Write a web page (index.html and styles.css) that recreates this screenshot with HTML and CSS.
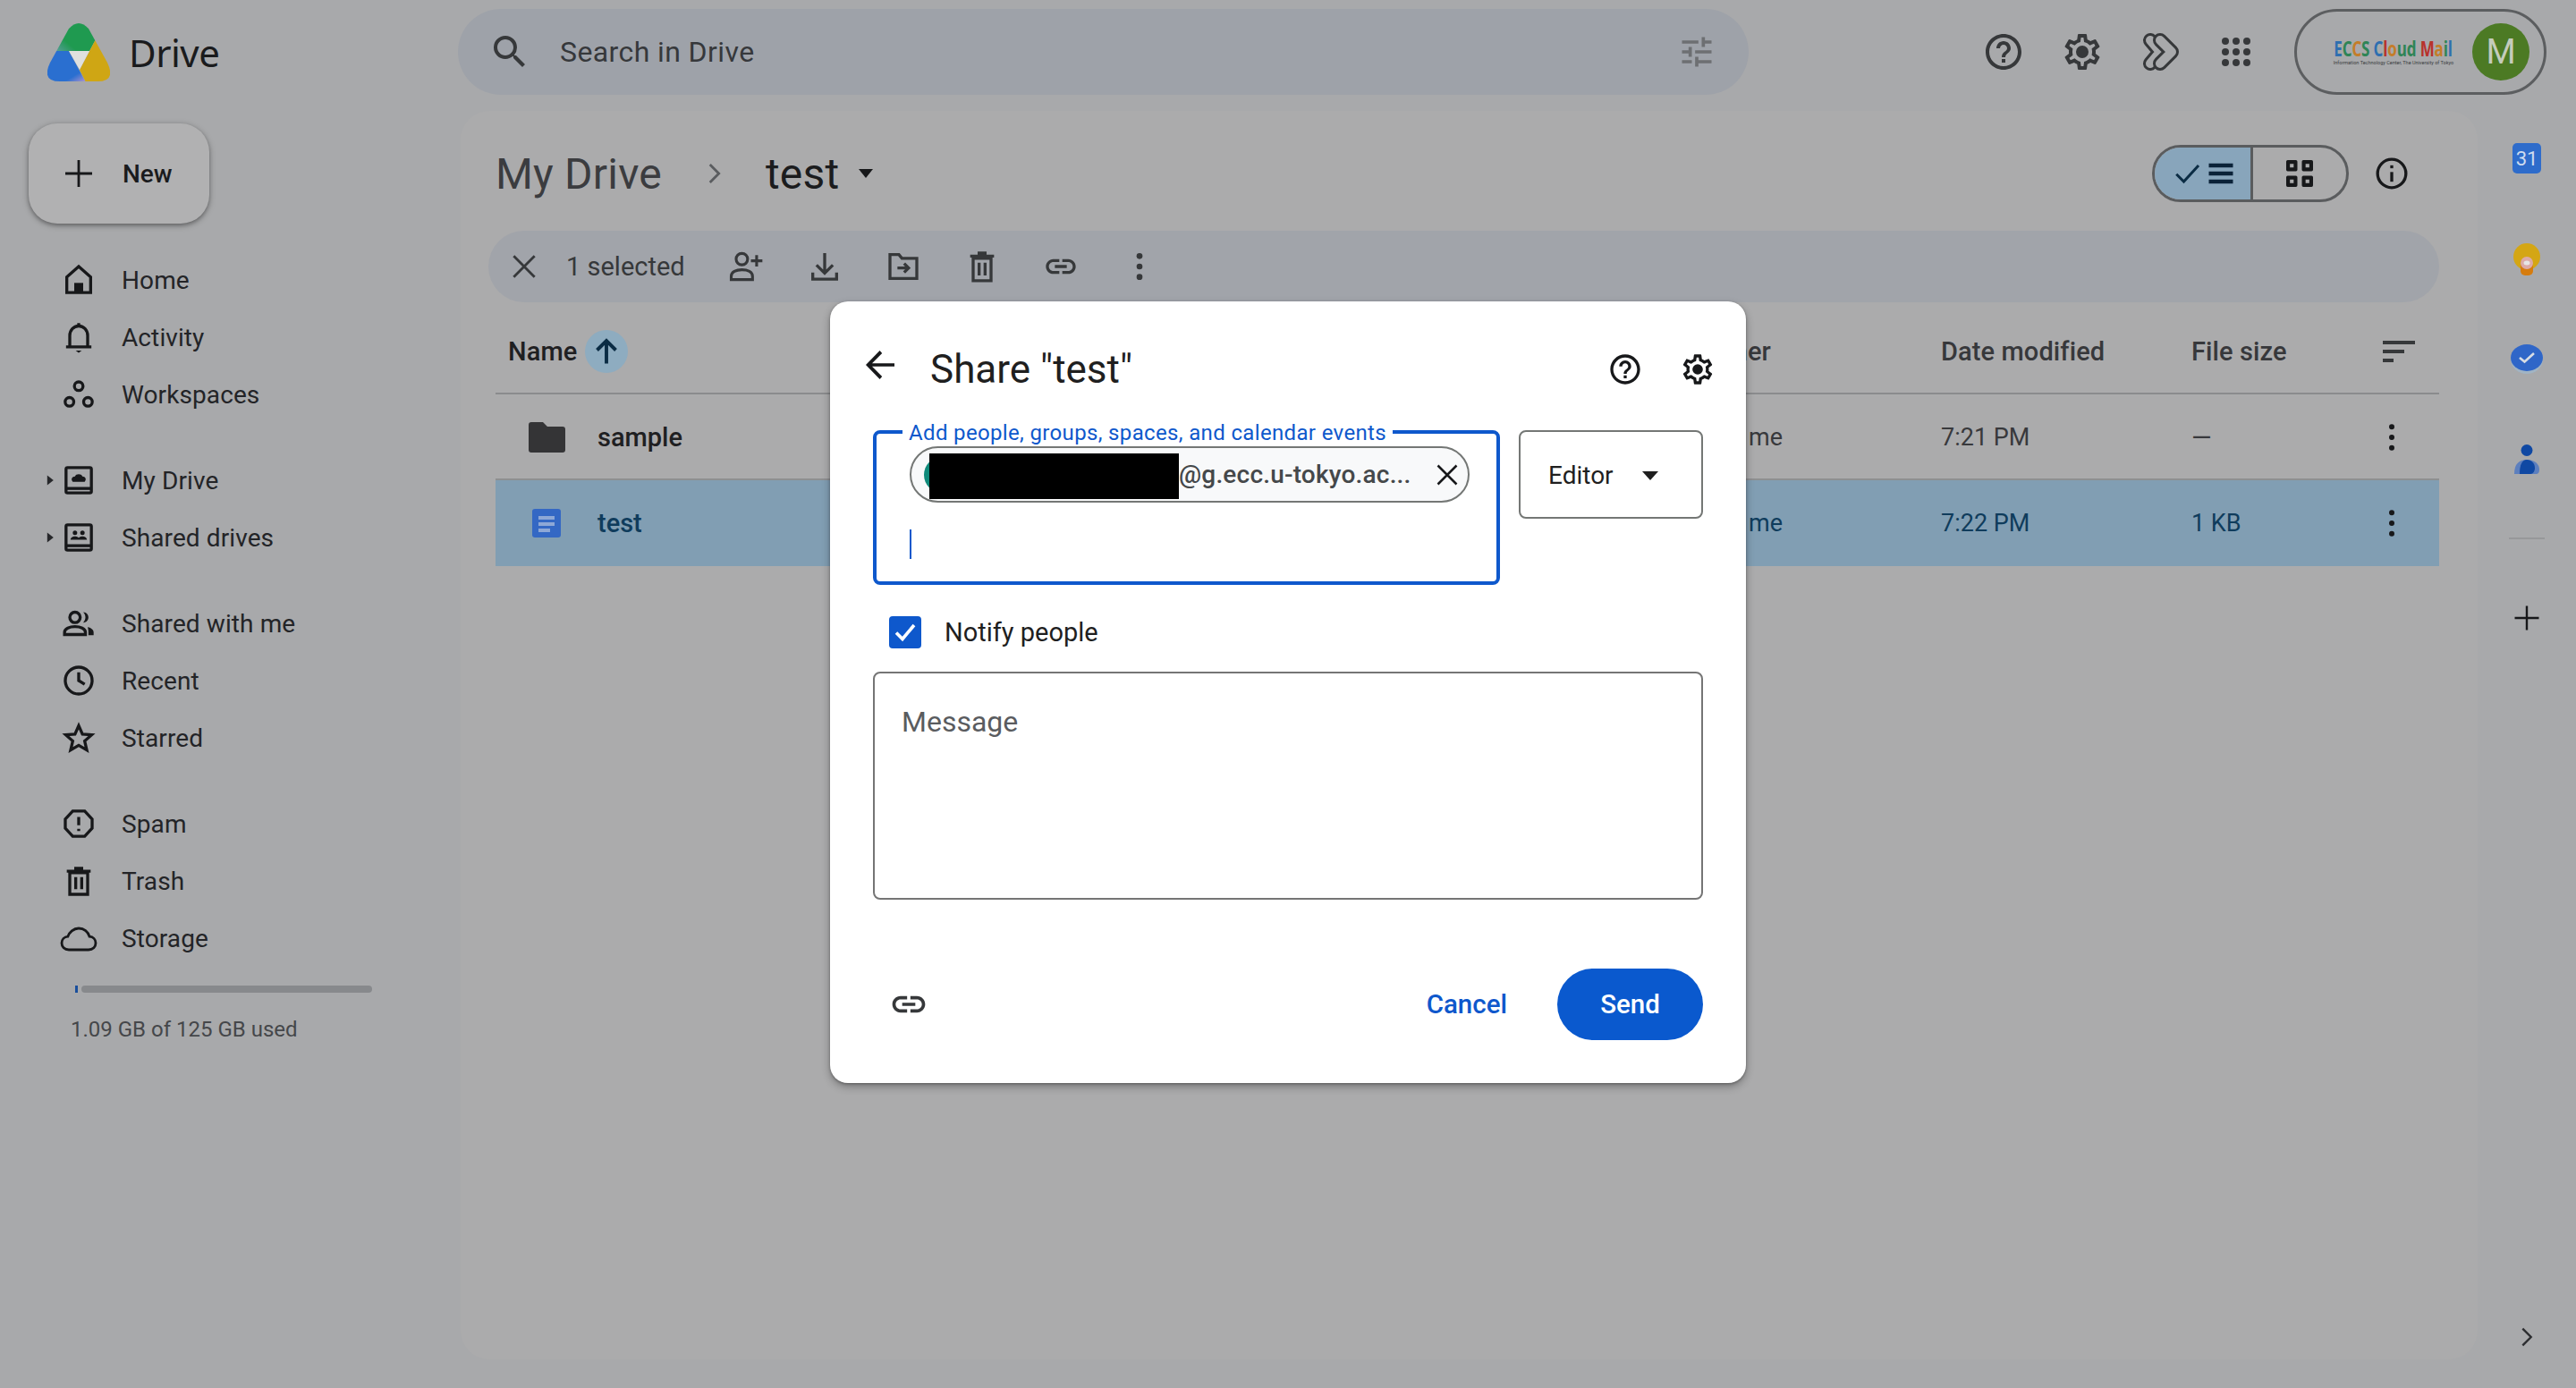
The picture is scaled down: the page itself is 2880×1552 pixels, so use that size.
FILE: index.html
```html
<!DOCTYPE html>
<html lang="en">
<head>
<meta charset="utf-8">
<title>Drive</title>
<link rel="stylesheet" href="styles.css">
</head>
<body>
<div class="app">
  <header class="topbar">
    <div class="brand">
      <svg class="logo" viewBox="0 0 70 65">
        <defs>
          <clipPath id="lg"><path d="M24 6Q35-6 46 6L67 44Q77 65 56 65L14 65Q-7 65 3 44Z"/></clipPath>
          <linearGradient id="gt" x1="0" y1="1" x2="1" y2="0.4"><stop offset="0" stop-color="#6f9fb8"/><stop offset=".35" stop-color="#1f9a50"/></linearGradient>
          <linearGradient id="bp" x1="0.4" y1="0.4" x2="0.9" y2="1"><stop offset=".65" stop-color="#2a6fd0"/><stop offset="1" stop-color="#9b8fd0"/></linearGradient>
        </defs>
        <g clip-path="url(#lg)">
          <polygon points="0,-5 70,-5 70,20 54,18 47,31 10,31" fill="url(#gt)"/>
          <polygon points="-5,31 24,31 43,66 -5,66" fill="url(#bp)"/>
          <polygon points="54,18 75,18 75,66 43,66 36,52" fill="#cfa614"/>
          <polygon points="24,31 47,31 36,52" fill="#dfe0de"/>
        </g>
      </svg>
      <span class="brand-name">Drive</span>
    </div>
    <div class="search">
      <span class="ibox"><svg class="i48 c-dark" viewBox="0 0 24 24"><path d="M15.5 14h-.79l-.28-.27A6.471 6.471 0 0 0 16 9.5 6.5 6.5 0 1 0 9.5 16c1.61 0 3.09-.59 4.23-1.57l.27.28v.79l5 4.99L20.49 19l-4.99-5zm-6 0C7.01 14 5 11.99 5 9.5S7.01 5 9.5 5 14 7.01 14 9.5 11.99 14 9.5 14z"/></svg></span>
      <span class="search-text">Search in Drive</span>
      <span class="ibox search-tune"><svg class="i44 c-mid" viewBox="0 0 24 24"><path d="M3 17v2h6v-2H3zM3 5v2h10V5H3zm10 16v-2h8v-2h-8v-2h-2v6h2zM7 9v2H3v2h4v2h2V9H7zm14 4v-2H11v2h10zm-6-4h2V7h4V5h-4V3h-2v6z"/></svg></span>
    </div>
    <div class="actions">
      <span class="ibox"><svg class="i48 c-dark" viewBox="0 0 24 24"><path d="M11 18h2v-2h-2v2zm1-16C6.48 2 2 6.48 2 12s4.48 10 10 10 10-4.48 10-10S17.52 2 12 2zm0 18c-4.41 0-8-3.59-8-8s3.59-8 8-8 8 3.59 8 8-3.59 8-8 8zm0-14c-2.21 0-4 1.79-4 4h2c0-1.1.9-2 2-2s2 .9 2 2c0 2-3 1.75-3 5h2c0-2.25 3-2.5 3-5 0-2.21-1.79-4-4-4z"/></svg></span>
      <span class="ibox"><svg class="i48 c-dark" viewBox="0 0 24 24"><use href="#gear"/></svg></span>
      <span class="ibox"><svg class="i48 blob" viewBox="0 0 24 24"><path class="blob-o" d="M6 5.500l5.500 6.500L6 18.500"/><path class="blob-i" d="M6 5.500l5.500 6.500L6 18.500"/><path class="blob-o" d="M11.500 5.500L18 12l-6.500 6.500"/><path class="blob-i" d="M11.500 5.500L18 12l-6.500 6.500"/></svg></span>
      <span class="ibox apps-box"><svg class="i48 c-dark" viewBox="0 0 24 24"><circle cx="6" cy="6" r="2"/><circle cx="12" cy="6" r="2"/><circle cx="18" cy="6" r="2"/><circle cx="6" cy="12" r="2"/><circle cx="12" cy="12" r="2"/><circle cx="18" cy="12" r="2"/><circle cx="6" cy="18" r="2"/><circle cx="12" cy="18" r="2"/><circle cx="18" cy="18" r="2"/></svg></span>
      <div class="account">
        <div class="org">
          <div class="org-name"><span class="k-b">E</span><span class="k-g">C</span><span class="k-o">C</span><span class="k-g">S</span> <span class="k-b">C</span><span class="k-r">l</span><span class="k-o">o</span><span class="k-g">u</span><span class="k-g">d</span> <span class="k-r">M</span><span class="k-o">a</span><span class="k-g">i</span><span class="k-b">l</span></div>
          <div class="org-sub">Information Technology Center, The University of Tokyo</div>
        </div>
        <div class="avatar">M</div>
      </div>
    </div>
  </header>

  <div class="layout">
    <aside class="sidebar">
      <button class="new-btn"><svg class="i48 c-ink" viewBox="0 0 24 24"><path d="M11.300 4.500h1.400v6.800h6.800v1.400h-6.800v6.800h-1.400v-6.800H4.500v-1.400h6.800z"/></svg><span>New</span></button>
      <nav class="nav">
        <div class="nav-group">
          <a class="nav-item"><span class="car"></span><span class="nav-ic"><svg class="i40 stroke-ink" viewBox="0 0 24 24"><path d="M4 20.500V10l8-7 8 7v10.500z"/><path class="fill-ink" d="M9 14h6v6.500H9z"/></svg></span>Home</a>
          <a class="nav-item"><span class="car"></span><span class="nav-ic"><svg class="i40 stroke-ink" viewBox="0 0 24 24"><path d="M3.500 18.500h17M6 18.500V11c0-3.500 2.500-6.500 6-6.500s6 3 6 6.500v7.500"/><path class="fill-ink" d="M10 21h4l-2 1.500zM11 2.500h2v2h-2z"/></svg></span>Activity</a>
          <a class="nav-item"><span class="car"></span><span class="nav-ic"><svg class="i40 stroke-ink" viewBox="0 0 24 24"><circle cx="12" cy="6.500" r="2.900"/><circle cx="5.800" cy="17" r="2.900"/><circle cx="18.200" cy="17" r="2.900"/></svg></span>Workspaces</a>
        </div>
        <div class="nav-group">
          <a class="nav-item"><span class="car car-on"></span><span class="nav-ic"><svg class="i40 stroke-ink" viewBox="0 0 24 24"><rect x="3.500" y="3.500" width="17" height="17" rx="1"/><path d="M3.500 17.500h17"/><path class="fill-ink" d="M8 13c-1.500-1.500-.5-3.500 1.500-3.500.5-2 4.500-2 5 0 2 0 3 2 1.500 3.500z"/></svg></span>My Drive</a>
          <a class="nav-item"><span class="car car-on"></span><span class="nav-ic"><svg class="i40 stroke-ink" viewBox="0 0 24 24"><rect x="3.500" y="3.500" width="17" height="17" rx="1"/><path d="M3.500 17.500h17"/><path class="fill-ink" d="M6.500 13.500c0-1.500 1.500-2.300 3-2.300s3 .8 3 2.300zM11.500 13.500c0-1.500 1.500-2.300 3-2.300s3 .8 3 2.300z"/><circle class="fill-ink" cx="9.500" cy="8.800" r="1.500"/><circle class="fill-ink" cx="14.500" cy="8.800" r="1.500"/></svg></span>Shared drives</a>
        </div>
        <div class="nav-group">
          <a class="nav-item"><span class="car"></span><span class="nav-ic"><svg class="i40 stroke-ink" viewBox="0 0 24 24"><circle cx="9.500" cy="8" r="3.500"/><path d="M2.500 19.500v-1.500c0-2.500 3.500-3.800 7-3.800s7 1.300 7 3.800v1.500z"/><path class="fill-ink" d="M15 4.500c2.500 0 3.500 2 3.500 3.500s-1 3.500-3.500 3.500c1-1 1.500-2.200 1.500-3.500S16 5.500 15 4.500zM18 14.500c2.500.5 4 1.800 4 3.500v2h-3.500v-2c0-1.500-.2-2.500-.5-3.500z"/></svg></span>Shared with me</a>
          <a class="nav-item"><span class="car"></span><span class="nav-ic"><svg class="i40 stroke-ink" viewBox="0 0 24 24"><circle cx="12" cy="12" r="9"/><path d="M12 6.500V12l4 2.500"/></svg></span>Recent</a>
          <a class="nav-item"><span class="car"></span><span class="nav-ic"><svg class="i40 stroke-ink" viewBox="0 0 24 24"><path d="M12 3.800l2.500 5.700 6.200.5-4.700 4.100 1.400 6.100-5.400-3.200-5.400 3.200 1.400-6.100-4.700-4.100 6.200-.5z"/></svg></span>Starred</a>
        </div>
        <div class="nav-group">
          <a class="nav-item"><span class="car"></span><span class="nav-ic"><svg class="i40 stroke-ink" viewBox="0 0 24 24"><path d="M8 3.500h8l5 5.500v6l-5 5.500H8L3 15V9z"/><path d="M12 7.500v5.500M12 15.500v1.500"/></svg></span>Spam</a>
          <a class="nav-item"><span class="car"></span><span class="nav-ic"><svg class="i40 stroke-ink" viewBox="0 0 24 24"><path d="M6 6.500h12v14.500H6zM4 5.500h16M9 3.500h6M10 9.500v8M14 9.500v8"/></svg></span>Trash</a>
          <a class="nav-item"><span class="car"></span><span class="nav-ic"><svg class="i48 stroke-thin" viewBox="0 0 24 24"><path d="M6.500 18.500c-2.500 0-4-1.700-4-3.700 0-2 1.500-3.500 3.400-3.700C6.700 8.800 9.100 6.500 12 6.500c3 0 5.300 2 6 4.600 2 .2 3.500 1.700 3.500 3.700s-1.500 3.700-4 3.700z"/></svg></span>Storage</a>
        </div>
      </nav>
      <div class="quota"><span class="quota-used"></span><span class="quota-free"></span></div>
      <div class="quota-text">1.09 GB of 125 GB used</div>
    </aside>

    <main class="card">
      <div class="title-row">
        <div class="crumbs">
          <span class="crumb">My Drive</span>
          <svg class="crumb-sep" viewBox="0 0 24 24"><path d="M9 5l7 7-7 7"/></svg>
          <span class="crumb crumb-cur">test</span>
          <svg class="crumb-caret" viewBox="0 0 20 12"><path d="M2 1h16l-8 10z"/></svg>
        </div>
        <div class="title-right">
          <div class="toggle">
            <span class="tog tog-on">
              <svg class="i36 stroke-navy" viewBox="0 0 24 24"><path d="M3.500 12.500l5.500 5.500 11-12"/></svg>
              <svg class="i36 bars" viewBox="0 0 24 24"><path d="M3 4.500h18v3H3zM3 10.500h18v3H3zM3 16.500h18v3H3z"/></svg>
            </span>
            <span class="tog"><svg class="i40 c-ink" viewBox="0 0 24 24"><path fill-rule="evenodd" d="M4 3h5.500a1 1 0 0 1 1 1v5.500a1 1 0 0 1-1 1H4a1 1 0 0 1-1-1V4a1 1 0 0 1 1-1zm1.500 2.500v2.500H8V5.500zM14.500 3H20a1 1 0 0 1 1 1v5.500a1 1 0 0 1-1 1h-5.500a1 1 0 0 1-1-1V4a1 1 0 0 1 1-1zM16 5.500v2.500h2.500V5.500zM4 13.500h5.500a1 1 0 0 1 1 1V20a1 1 0 0 1-1 1H4a1 1 0 0 1-1-1v-5.500a1 1 0 0 1 1-1zM5.500 16v2.500H8V16zM14.500 13.500H20a1 1 0 0 1 1 1V20a1 1 0 0 1-1 1h-5.500a1 1 0 0 1-1-1v-5.500a1 1 0 0 1 1-1zM16 16v2.500h2.500V16z"/></svg></span>
          </div>
          <span class="ibox"><svg class="i40 stroke-ink" viewBox="0 0 24 24"><circle cx="12" cy="12" r="9.500"/><path d="M12 11v6.500"/><path d="M12 6.500v2"/></svg></span>
        </div>
      </div>

      <div class="toolbar">
        <span class="ibox"><svg class="i40 stroke-x-dark" viewBox="0 0 24 24"><path d="M5 5l14 14M19 5L5 19"/></svg></span>
        <span class="sel-count">1 selected</span>
        <div class="tool-icons">
          <span class="ibox"><svg class="i44 stroke-dark-thin" viewBox="0 0 24 24"><circle cx="9.500" cy="7.500" r="3.500"/><path d="M3 20v-2c0-2.700 3-4 6.500-4s6.500 1.300 6.500 4v2z"/><path d="M18.500 5v7M15 8.500h7"/></svg></span>
          <span class="ibox"><svg class="i40 stroke-dark" viewBox="0 0 24 24"><path d="M12 3v13M6.500 11l5.500 5.500 5.500-5.500M4 16v4.500h16V16"/></svg></span>
          <span class="ibox"><svg class="i40 stroke-dark" viewBox="0 0 24 24"><path d="M3 4h6l2 2.500h10V20H3z"/><path d="M8 13h7M12.500 10l3 3-3 3"/></svg></span>
          <span class="ibox"><svg class="i40 stroke-dark" viewBox="0 0 24 24"><path d="M6 6.500h12v15H6zM4 5h16M9 3h6M10 9.500v8.500M14 9.500v8.500"/></svg></span>
          <span class="ibox"><svg class="i40 c-dark" viewBox="0 0 24 24"><use href="#link"/></svg></span>
          <span class="ibox"><svg class="i40 c-dark" viewBox="0 0 24 24"><circle cx="12" cy="5" r="2"/><circle cx="12" cy="12" r="2"/><circle cx="12" cy="19" r="2"/></svg></span>
        </div>
      </div>

      <div class="table">
        <div class="thead">
          <div class="cell-name th-name"><span>Name</span><span class="sort-up"><svg class="i36 stroke-arrow" viewBox="0 0 24 24"><path d="M12 21V4M5 11l7-7 7 7"/></svg></span></div>
          <div>Owner</div>
          <div>Date modified</div>
          <div>File size</div>
          <div class="cell-more cell-sort"><svg class="sort-lines" viewBox="0 0 36 24"><path d="M0 0h36v4H0zM0 10h24v4H0zM0 20h12v4H0z"/></svg></div>
        </div>
        <div class="row">
          <div class="cell-name"><span class="file-ic"><svg class="folder" viewBox="0 0 41 34"><path d="M3 0h13l5 5h17a3 3 0 0 1 3 3v23a3 3 0 0 1-3 3H3a3 3 0 0 1-3-3V3a3 3 0 0 1 3-3z"/></svg></span><span class="file-name">sample</span></div>
          <div class="owner">me</div>
          <div>7:21 PM</div>
          <div class="dash">—</div>
          <div class="cell-more"><svg class="i40 c-ink" viewBox="0 0 24 24"><circle cx="12" cy="5" r="1.800"/><circle cx="12" cy="12" r="1.800"/><circle cx="12" cy="19" r="1.800"/></svg></div>
        </div>
        <div class="row row-sel">
          <div class="cell-name"><span class="file-ic"><svg class="doc" viewBox="0 0 32 32"><rect width="32" height="32" rx="3" fill="#3468c4"/><path d="M7 8h18v4H7zM7 15h18v4H7zM7 22h13v4H7z" fill="#8ea8d6"/></svg></span><span class="file-name">test</span></div>
          <div class="owner">me</div>
          <div>7:22 PM</div>
          <div>1 KB</div>
          <div class="cell-more"><svg class="i40 c-ink" viewBox="0 0 24 24"><circle cx="12" cy="5" r="1.800"/><circle cx="12" cy="12" r="1.800"/><circle cx="12" cy="19" r="1.800"/></svg></div>
        </div>
      </div>
    </main>

    <aside class="rail">
      <div class="cal">31</div>
      <svg class="keep" viewBox="0 0 30 36"><ellipse cx="15" cy="15" rx="15" ry="15" fill="#d4a614"/><path d="M8 24h14v7a5 5 0 0 1-5 5h-4a5 5 0 0 1-5-5z" fill="#d67c0e"/><circle cx="15" cy="22" r="7" fill="#dcaaa8"/><ellipse cx="15" cy="22" rx="3.500" ry="2.500" fill="#e6e6e6"/></svg>
      <svg class="tasks" viewBox="0 0 36 33"><ellipse cx="18" cy="17" rx="18" ry="16" fill="#a1b4c4"/><ellipse cx="18" cy="15" rx="18" ry="15" fill="#2f66c8"/><path d="M10 15l5.500 4.500L26 10" fill="none" stroke="#d8dde4" stroke-width="2.600"/></svg>
      <svg class="contacts" viewBox="0 0 28 33"><ellipse cx="14" cy="6.500" rx="6.500" ry="6.500" fill="#0f48a3"/><path d="M0 33c0-11 5-16 14-16s14 5 14 11c0 3-1 5-4 5z" fill="#5c7fbe"/><path d="M6 33c0-11 3-16 8-16s9 4 9 9c0 4-2 7-5 7z" fill="#0f48a3"/></svg>
      <div class="rail-div"></div>
      <svg class="i36 c-ink rail-plus" viewBox="0 0 24 24"><path d="M11.200 3h1.600v8.200H21v1.600h-8.200V21h-1.600v-8.200H3v-1.600h8.200z"/></svg>
      <svg class="rail-chev" viewBox="0 0 24 24"><path d="M8.500 5l7 7-7 7"/></svg>
    </aside>
  </div>

  <section class="dialog">
    <div class="dlg-head">
      <svg class="i48 dlg-back c-ink" viewBox="0 0 24 24"><path d="M20 11.100H7.500l5.600-5.600L11.800 4 4 12l7.800 8 1.300-1.500-5.600-5.600H20z"/></svg>
      <h1 class="dlg-title">Share "test"</h1>
      <div class="dlg-tools">
        <span class="dlg-tool"><svg class="i40 c-ink" viewBox="0 0 24 24"><path d="M11 18h2v-2h-2v2zm1-16C6.480 2 2 6.480 2 12s4.480 10 10 10 10-4.480 10-10S17.520 2 12 2zm0 18c-4.410 0-8-3.590-8-8s3.590-8 8-8 8 3.590 8 8-3.590 8-8 8zm0-14c-2.210 0-4 1.790-4 4h2c0-1.100.9-2 2-2s2 .9 2 2c0 2-3 1.750-3 5h2c0-2.250 3-2.500 3-5 0-2.210-1.790-4-4-4z"/></svg></span>
        <span class="dlg-tool"><svg class="i40 c-ink" viewBox="0 0 24 24"><use href="#gear"/></svg></span>
      </div>
    </div>
    <div class="dlg-fields">
      <div class="people">
        <label class="people-label">Add people, groups, spaces, and calendar events</label>
        <div class="chip">
          <span class="chip-av"></span>
          <span class="redact"></span>
          <span class="chip-text">@g.ecc.u-tokyo.ac...</span>
          <svg class="i36 chip-x stroke-x-ink" viewBox="0 0 24 24"><path d="M5 5l14 14M19 5L5 19"/></svg>
        </div>
        <span class="caret"></span>
      </div>
      <div class="role"><span>Editor</span><svg class="role-arrow" viewBox="0 0 20 12"><path d="M1 1h18l-9 10z"/></svg></div>
    </div>
    <div class="notify">
      <span class="check"><svg viewBox="0 0 36 36"><path d="M8 18.500l7 7L28 10" fill="none" stroke="#fff" stroke-width="3.600"/></svg></span>
      <span>Notify people</span>
    </div>
    <div class="message">Message</div>
    <div class="dlg-foot">
      <span class="ibox foot-link"><svg class="i44 c-dark" viewBox="0 0 24 24"><use href="#link"/></svg></span>
      <span class="cancel">Cancel</span>
      <span class="send">Send</span>
    </div>
  </section>
</div>

<svg class="defs" width="0" height="0">
  <symbol id="gear" viewBox="0 0 24 24"><path d="M19.430 12.980c.04-.32.07-.64.07-.98 0-.34-.03-.66-.07-.98l2.110-1.650c.19-.15.24-.42.12-.64l-2-3.460c-.09-.16-.26-.25-.44-.25-.06 0-.12.01-.17.03l-2.490 1c-.52-.4-1.080-.73-1.690-.98l-.38-2.650C14.460 2.180 14.250 2 14 2h-4c-.25 0-.46.18-.49.42l-.38 2.650c-.61.25-1.170.59-1.690.98l-2.490-1c-.06-.02-.12-.03-.18-.03-.17 0-.34.09-.43.25l-2 3.460c-.13.22-.07.49.12.64l2.110 1.650c-.04.32-.07.65-.07.98 0 .33.03.66.07.98l-2.110 1.650c-.19.15-.24.42-.12.64l2 3.460c.09.16.26.25.44.25.06 0 .12-.01.17-.03l2.490-1c.52.4 1.080.73 1.690.98l.38 2.650c.03.24.24.42.49.42h4c.25 0 .46-.18.49-.42l.38-2.650c.61-.25 1.170-.59 1.690-.98l2.490 1c.06.02.12.03.18.03.17 0 .34-.09.43-.25l2-3.460c.12-.22.07-.49-.12-.64l-2.110-1.650zm-1.980-1.710c.04.31.05.52.05.73 0 .21-.02.43-.05.73l-.14 1.130.89.7 1.080.84-.7 1.210-1.270-.51-1.040-.42-.9.68c-.43.32-.84.56-1.250.73l-1.060.43-.16 1.130-.2 1.350h-1.400l-.19-1.350-.16-1.130-1.060-.43c-.43-.18-.83-.41-1.230-.71l-.91-.7-1.060.43-1.270.51-.7-1.210 1.080-.84.89-.7-.14-1.130c-.03-.31-.05-.54-.05-.74s.02-.43.05-.73l.14-1.130-.89-.7-1.080-.84.7-1.210 1.270.51 1.040.42.9-.68c.43-.32.84-.56 1.250-.73l1.060-.43.16-1.130.2-1.350h1.390l.19 1.350.16 1.130 1.060.43c.43.18.83.41 1.230.71l.91.7 1.060-.43 1.270-.51.7 1.210-1.070.85-.89.7.14 1.130zM12 8.500a3.500 3.500 0 1 0 0 7 3.500 3.500 0 0 0 0-7z"/></symbol>
  <symbol id="link" viewBox="0 0 24 24"><path d="M17 7h-4v2h4c1.650 0 3 1.350 3 3s-1.350 3-3 3h-4v2h4c2.760 0 5-2.240 5-5s-2.240-5-5-5zm-6 8H7c-1.650 0-3-1.350-3-3s1.350-3 3-3h4V7H7c-2.760 0-5 2.240-5 5s2.240 5 5 5h4v-2zm-3-4h8v2H8z"/></symbol>
</svg>
</body>
</html>
```

FILE: styles.css
```css
* { box-sizing: border-box; }
html, body { margin: 0; padding: 0; }
body { width: 2880px; height: 1552px; overflow: hidden; background: #a8a9ab; font-family: Roboto, "Noto Sans", sans-serif; color: #1e1f21; }
.defs { position: absolute; }
.app { position: relative; width: 2880px; height: 1552px; display: flex; flex-direction: column; }

svg { display: block; flex: none; }
.i36 { width: 36px; height: 36px; }
.i40 { width: 40px; height: 40px; }
.i44 { width: 44px; height: 44px; }
.i48 { width: 48px; height: 48px; }
.c-dark { fill: #36383a; }
.c-mid { fill: #6d6f72; }
.c-ink { fill: #17181a; }
.stroke-dark { fill: none; stroke: #36383a; stroke-width: 2; }
.stroke-dark-thin { fill: none; stroke: #36383a; stroke-width: 1.700; }
.stroke-ink { fill: none; stroke: #17181a; stroke-width: 2; }
.stroke-thin { fill: none; stroke: #17181a; stroke-width: 1.400; }
.stroke-navy { fill: none; stroke: #0b2c44; stroke-width: 2; }
.stroke-arrow { fill: none; stroke: #0b2c44; stroke-width: 2.600; }
.stroke-x-dark { fill: none; stroke: #36383a; stroke-width: 1.700; }
.stroke-x-ink { fill: none; stroke: #17181a; stroke-width: 1.700; }
.fill-ink { fill: #17181a; stroke: none; }
.bars { fill: #0b2238; }
.ibox { width: 48px; height: 48px; display: flex; align-items: center; justify-content: center; flex: none; }
.blob { fill: none; stroke-linecap: round; stroke-linejoin: round; }
.blob-o { stroke: #36383a; stroke-width: 8; }
.blob-i { stroke: #a8a9ab; stroke-width: 5; }

/* top bar */
.topbar { height: 124px; flex: none; display: flex; align-items: flex-start; padding-top: 10px; }
.brand { width: 512px; height: 96px; flex: none; display: flex; align-items: center; padding-left: 53px; gap: 21px; }
.logo { width: 70px; height: 65px; }
.brand-name { font-size: 42px; color: #1a1b1d; font-family: "Noto Sans", Roboto, sans-serif; letter-spacing: -0.5px; }
.search { width: 1443px; height: 96px; flex: none; border-radius: 48px; background: #9ea2a9; display: flex; align-items: center; padding: 0 34px; gap: 32px; }
.search-text { font-size: 32px; color: #36383b; letter-spacing: .4px; }
.search-tune { margin-left: auto; }
.actions { flex: 1; display: flex; align-items: center; height: 96px; justify-content: flex-end; padding-right: 33px; gap: 40px; }
.apps-box { margin-left: -4px; }
.account { width: 282px; height: 96px; flex: none; border: 3px solid #5c5e60; border-radius: 48px; display: flex; align-items: center; padding-left: 40px; margin-left: 1px; }
.org { width: 136px; display: flex; flex-direction: column; align-items: center; line-height: 1; }
.org-name { font-family: "Open Sans", sans-serif; font-size: 23px; font-weight: 700; letter-spacing: -.2px; white-space: nowrap; transform: scaleX(.74); }
.org-sub { font-size: 5.500px; color: #3a3c40; white-space: nowrap; margin-top: 2px; }
.k-b { color: #2f6fb0; } .k-g { color: #2f8456; } .k-o { color: #c47d2a; } .k-r { color: #b8322c; }
.avatar { width: 64px; height: 64px; border-radius: 50%; background: #4c7a24; color: #c4ccbc; font-size: 38px; display: flex; align-items: center; justify-content: center; margin-left: 20px; flex: none; }

/* layout */
.layout { flex: 1; display: flex; min-height: 0; }
.sidebar { width: 515px; flex: none; padding-top: 14px; }
.new-btn { width: 202px; height: 112px; margin-left: 32px; border: 0; border-radius: 32px; background: #b1b1b2; box-shadow: 0 2px 5px rgba(0,0,0,.35), 0 2px 8px rgba(0,0,0,.15); display: flex; align-items: center; padding: 0 0 0 32px; gap: 25px; font: 500 28px Roboto, sans-serif; color: #1a1b1d; margin-bottom: 31px; }
.nav-group { margin-bottom: 32px; }
.nav-group:last-child { margin-bottom: 0; }
.nav-item { height: 64px; display: flex; align-items: center; padding-left: 50px; font-size: 28px; letter-spacing: .1px; color: #232427; }
.car { width: 14px; height: 14px; flex: none; }
.car-on { background: #26272a; clip-path: polygon(20% 10%, 70% 50%, 20% 90%); }
.nav-ic { width: 48px; height: 48px; flex: none; display: flex; align-items: center; justify-content: center; margin-right: 24px; }
.quota { margin: 21px 0 0 84px; width: 332px; height: 8px; display: flex; gap: 4px; }
.quota-used { width: 3px; background: #1a4f9c; }
.quota-free { flex: 1; background: #87898c; border-radius: 4px; }
.quota-text { margin: 27px 0 0 79px; font-size: 24px; color: #45474a; }

/* main card */
.card { flex: none; width: 2255px; height: 1396px; background: #ababac; border-radius: 32px; }
.title-row { height: 134px; padding: 6px 72px 0 39px; display: flex; align-items: center; justify-content: space-between; }
.crumbs { display: flex; align-items: center; }
.crumb { font-size: 48px; letter-spacing: .2px; color: #3b3c3f; }
.crumb-cur { color: #1b1c1e; }
.crumb-sep { width: 34px; height: 34px; margin: 0 41px 0 41px; fill: none; stroke: #5a5c5f; stroke-width: 2; }
.crumb-caret { width: 20px; height: 12px; margin-left: 20px; fill: #17181a; }
.title-right { display: flex; align-items: center; gap: 24px; }
.toggle { width: 220px; height: 64px; border: 3px solid #5a5c5e; border-radius: 32px; display: flex; overflow: hidden; }
.tog { display: flex; align-items: center; justify-content: center; flex: 1; }
.tog-on { flex: none; width: 110px; background: #88a5bb; border-right: 3px solid #5a5c5e; gap: 1px; padding-left: 4px; }

.toolbar { height: 80px; margin: 0 43px 0 31px; border-radius: 40px; background: #a1a4aa; display: flex; align-items: center; padding-left: 16px; }
.sel-count { width: 132px; margin-left: 23px; font-size: 29px; color: #36383a; white-space: nowrap; }
.tool-icons { display: flex; gap: 40px; margin-left: 45px; }

.table { margin: 0 43px 0 39px; font-size: 27px; color: #38393c; }
.thead, .row { display: grid; grid-template-columns: 1342px 274px 280px 174px 100px; align-items: center; }
.thead { height: 103px; padding-top: 9px; border-bottom: 2px solid #8a8b8d; font-weight: 500; font-size: 29px; letter-spacing: .1px; color: #37383b; }
.row { height: 96px; border-bottom: 2px solid #8e8f91; padding-top: 2px; }
.row:last-child { border-bottom: 0; padding-top: 0; }
.row-sel { background: #819eb3; color: #0f3c5c; height: 96px; }
.cell-name { display: flex; align-items: center; }
.th-name { padding-left: 14px; color: #1f2022; gap: 9px; }
.sort-up { width: 48px; height: 48px; border-radius: 50%; background: #8eacc0; display: flex; align-items: center; justify-content: center; }
.file-ic { width: 114px; display: flex; justify-content: center; flex: none; }
.folder { width: 41px; height: 34px; fill: #343436; }
.doc { width: 32px; height: 32px; }
.file-name { font-weight: 500; font-size: 29px; color: #1f2022; }
.row-sel .file-name { color: #0f3c5c; }
.owner { padding-left: 59px; }
.dash { font-size: 29px; }
.cell-more { display: flex; justify-content: center; }
.cell-sort { padding-left: 16px; }
.sort-lines { width: 36px; height: 24px; fill: #36383a; }

/* right rail */
.rail { flex: 1; display: flex; flex-direction: column; align-items: center; padding: 36px 0 41px; }
.cal { width: 32px; height: 34px; background: #2e6ccb; border-radius: 5px; color: #cfdcef; font-size: 22px; display: flex; align-items: center; justify-content: center; flex: none; }
.keep { width: 30px; height: 36px; margin-top: 78px; }
.tasks { width: 36px; height: 33px; margin-top: 77px; }
.contacts { width: 28px; height: 33px; margin-top: 79px; }
.rail-div { width: 40px; height: 2px; background: #97989a; margin-top: 71px; flex: none; }
.rail-plus { margin-top: 70px; }
.rail-chev { width: 32px; height: 32px; margin-top: auto; fill: none; stroke: #2c2d30; stroke-width: 1.800; }

/* dialog */
.dialog { position: absolute; left: 928px; top: 337px; width: 1024px; background: #fff; border-radius: 20px; padding: 0 48px 48px 48px; box-shadow: 0 4px 10px rgba(0,0,0,.3), 0 1px 3px rgba(0,0,0,.3); color: #1f1f1f; }
.dlg-head { height: 144px; padding-top: 8px; display: flex; align-items: center; }
.dlg-back { margin: -10px 0 0 -16px; }
.dlg-title { margin: 0 0 0 32px; font-size: 44px; font-weight: 400; color: #1f1f1f; }
.dlg-tools { margin: 0 -14px 0 auto; display: flex; gap: 41px; }
.dlg-tool { width: 40px; height: 40px; }
.dlg-fields { display: flex; align-items: flex-start; gap: 21px; }
.people { position: relative; width: 701px; height: 173px; border: 4px solid #0e58cc; border-radius: 8px; padding: 14px 0 0 37px; }
.people-label { position: absolute; left: 29px; top: -15px; padding: 0 7px; background: #fff; font-size: 24px; letter-spacing: .35px; line-height: 28px; color: #0e58cc; white-space: nowrap; }
.chip { width: 626px; height: 63px; border: 2px solid #747775; border-radius: 32px; background: #f8f9fa; display: flex; align-items: center; overflow: hidden; }
.chip-av { width: 40px; height: 40px; border-radius: 50%; background: #0f8a7a; margin-left: 14px; flex: none; }
.redact { width: 279px; height: 51px; background: #000; margin: 4px 0 0 -34px; flex: none; position: relative; }
.chip-text { font-size: 28px; font-weight: 500; color: #45484a; letter-spacing: .2px; white-space: nowrap; }
.chip-x { margin-left: auto; margin-right: 5px; }
.caret { display: block; width: 2px; height: 33px; background: #0e58cc; margin-top: 30px; }
.role { width: 206px; height: 99px; border: 2px solid #747775; border-radius: 8px; display: flex; align-items: center; padding: 2px 0 0 31px; font-size: 28px; color: #1f1f1f; }
.role-arrow { width: 20px; height: 12px; margin-left: 31px; fill: #1f1f1f; }
.notify { display: flex; align-items: center; gap: 26px; margin: 35px 0 0 18px; height: 36px; font-size: 29px; color: #1f1f1f; }
.check { width: 36px; height: 36px; border-radius: 4px; background: #0e58cc; flex: none; }
.check svg { width: 36px; height: 36px; }
.message { height: 255px; margin-top: 26px; border: 2px solid #757575; border-radius: 8px; padding: 34px 30px; font-size: 32px; line-height: 40px; color: #5a5c5f; }
.dlg-foot { height: 80px; margin-top: 77px; display: flex; align-items: center; }
.foot-link { margin-left: 16px; }
.cancel { margin-left: auto; font-size: 29.500px; font-weight: 500; color: #0e58cc; }
.send { width: 163px; height: 80px; margin-left: 56px; border-radius: 40px; background: #0a59ce; color: #fff; font-size: 29.500px; font-weight: 500; display: flex; align-items: center; justify-content: center; }
```
